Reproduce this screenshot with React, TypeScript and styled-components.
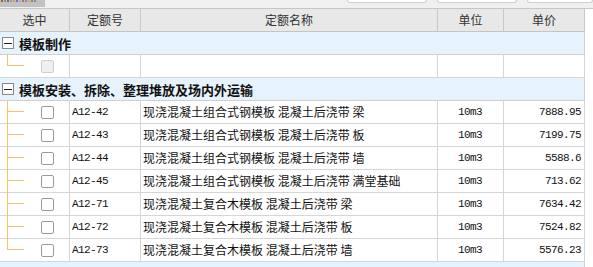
import React from "react";
import styled, { createGlobalStyle } from "styled-components";

const Global = createGlobalStyle`
  html, body { margin: 0; padding: 0; background: #ffffff; }
  body { font-family: "Noto Sans CJK SC", "Liberation Sans", sans-serif; font-size: 12px; color: #000; }
`;

const Page = styled.div`
  width: 593px;
  height: 267px;
  overflow: hidden;
  background: #ffffff;
`;

const TopStrip = styled.div`
  height: 8px;
  background: #f0f0f0;
  display: flex;
  align-items: flex-start;
  border-bottom: 1px solid #c6c6c6;
`;

const ToolStub = styled.div`
  width: 45px;
  height: 7px;
  background: #c2c2c2;
  overflow: hidden;
`;

const ToolPixels = styled.div`
  display: flex;
  gap: 1px;
  padding-left: 1px;
  height: 2px;
`;

const Pix = styled.span<{ $c: string }>`
  width: 2px;
  height: 2px;
  background: ${(p) => p.$c};
`;

const InputStubs = styled.div`
  margin-left: auto;
  display: flex;
  gap: 10px;
`;

const InputStub = styled.div<{ $w: number }>`
  width: ${(p) => p.$w}px;
  height: 3px;
  background: #ffffff;
  border: 1px solid #cfcfcf;
  border-top: none;
  border-radius: 0 0 3px 3px;
  box-sizing: border-box;
`;

const Grid = styled.div`
  width: 585px;
  display: grid;
  grid-template-columns: 70px 71px 297px 66px 81px;
  grid-auto-rows: 23px;
`;

const HeadCell = styled.div`
  box-sizing: border-box;
  background: #e8e8e8;
  border-right: 1px solid #c8c8c8;
  border-bottom: 1px solid #c4c4c4;
  display: flex;
  align-items: center;
  justify-content: center;
  color: #333;
  font-size: 12px;
  line-height: 1;
`;

const GroupRow = styled.div`
  grid-column: 1 / -1;
  box-sizing: border-box;
  background: #e6f3fd;
  border-right: 1px solid #d0d0d0;
  border-bottom: 1px solid #d0d0d0;
  display: flex;
  align-items: center;
  padding-left: 2px;
  gap: 5px;
`;

const Toggle = styled.span`
  width: 12px;
  height: 12px;
  box-sizing: border-box;
  border: 1px solid #8a8a8a;
  background: #fff;
  display: flex;
  align-items: center;
  justify-content: center;
  &::after {
    content: "";
    width: 8px;
    height: 1px;
    background: #222;
  }
`;

const GroupTitle = styled.span`
  font-weight: bold;
  font-size: 13px;
  color: #111;
  line-height: 1;
`;

const Cell = styled.div<{ $align?: "left" | "center" | "right" }>`
  box-sizing: border-box;
  border-right: 1px solid #d6d6d6;
  border-bottom: 1px solid #d6d6d6;
  display: flex;
  align-items: center;
  justify-content: ${(p) =>
    p.$align === "center" ? "center" : p.$align === "right" ? "flex-end" : "flex-start"};
  padding: 0 3px 0 2px;
  white-space: nowrap;
  overflow: hidden;
  background: #fff;
`;

const Mono = styled.span`
  font-family: "Liberation Mono", "DejaVu Sans Mono", monospace;
  font-size: 11px;
  letter-spacing: -0.6px;
  color: #111;
`;

const NameText = styled.span`
  font-size: 12px;
  color: #111;
  line-height: 1;
`;

const TreeCell = styled.div<{ $last: boolean }>`
  box-sizing: border-box;
  position: relative;
  border-right: 1px solid #d6d6d6;
  border-bottom: 1px solid #d6d6d6;
  display: flex;
  align-items: center;
  padding-left: 41px;
  background: #fff;
  &::before {
    content: "";
    position: absolute;
    left: 7px;
    top: 0;
    width: 1px;
    ${(p) => (p.$last ? "height: 11px;" : "bottom: -1px;")}
    background: #fbc06a;
    z-index: 1;
  }
  &::after {
    content: "";
    position: absolute;
    left: 7px;
    top: 10px;
    width: 17px;
    height: 1px;
    background: #fbc06a;
    z-index: 1;
  }
`;

const Check = styled.span<{ $disabled?: boolean }>`
  width: 13px;
  height: 13px;
  box-sizing: border-box;
  border: 1px solid ${(p) => (p.$disabled ? "#cfcfcf" : "#9a9a9a")};
  border-radius: 2px;
  background: ${(p) => (p.$disabled ? "#f0f0f0" : "#ffffff")};
`;

type Item = { code: string; name: string; unit: string; price: string };

const groups: { title: string; items: (Item | null)[] }[] = [
  { title: "模板制作", items: [null] },
  {
    title: "模板安装、拆除、整理堆放及场内外运输",
    items: [
      { code: "A12-42", name: "现浇混凝土组合式钢模板 混凝土后浇带 梁", unit: "10m3", price: "7888.95" },
      { code: "A12-43", name: "现浇混凝土组合式钢模板 混凝土后浇带 板", unit: "10m3", price: "7199.75" },
      { code: "A12-44", name: "现浇混凝土组合式钢模板 混凝土后浇带 墙", unit: "10m3", price: "5588.6" },
      { code: "A12-45", name: "现浇混凝土组合式钢模板 混凝土后浇带 满堂基础", unit: "10m3", price: "713.62" },
      { code: "A12-71", name: "现浇混凝土复合木模板 混凝土后浇带 梁", unit: "10m3", price: "7634.42" },
      { code: "A12-72", name: "现浇混凝土复合木模板 混凝土后浇带 板", unit: "10m3", price: "7524.82" },
      { code: "A12-73", name: "现浇混凝土复合木模板 混凝土后浇带 墙", unit: "10m3", price: "5576.23" },
    ],
  },
  { title: "", items: [] },
];

const pixels = ["#7a6a5a", "#c08040", "#5070a0", "#a0a0a0", "#d0a050", "#6080c0", "#b0b0b0", "#c07050", "#8090b0", "#d0b070", "#a08060", "#7090c0"];

export default function App() {
  return (
    <Page>
      <Global />
      <TopStrip>
        <ToolStub>
          <ToolPixels>
            {pixels.map((c, i) => (
              <Pix key={i} $c={c} />
            ))}
          </ToolPixels>
        </ToolStub>
        <InputStubs>
          <InputStub $w={80} />
          <InputStub $w={80} />
          <InputStub $w={66} />
        </InputStubs>
      </TopStrip>
      <Grid>
        <HeadCell>选中</HeadCell>
        <HeadCell>定额号</HeadCell>
        <HeadCell>定额名称</HeadCell>
        <HeadCell>单位</HeadCell>
        <HeadCell>单价</HeadCell>
        {groups.map((g, gi) => (
          <React.Fragment key={gi}>
            <GroupRow>
              {g.title && <Toggle />}
              <GroupTitle>{g.title}</GroupTitle>
            </GroupRow>
            {g.items.map((it, i) => (
              <React.Fragment key={i}>
                <TreeCell $last={i === g.items.length - 1}>
                  <Check $disabled={!it} />
                </TreeCell>
                <Cell>{it && <Mono>{it.code}</Mono>}</Cell>
                <Cell>{it && <NameText>{it.name}</NameText>}</Cell>
                <Cell $align="center">{it && <Mono>{it.unit}</Mono>}</Cell>
                <Cell $align="right">{it && <Mono>{it.price}</Mono>}</Cell>
              </React.Fragment>
            ))}
          </React.Fragment>
        ))}
      </Grid>
    </Page>
  );
}
